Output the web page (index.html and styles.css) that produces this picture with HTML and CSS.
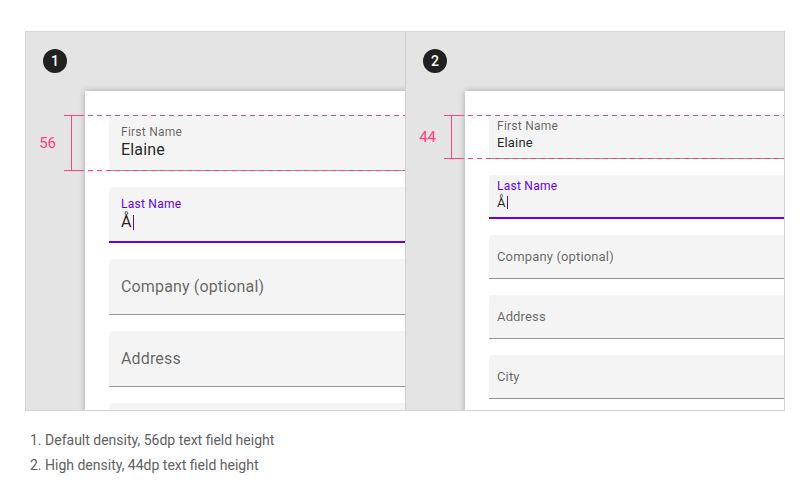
FILE: index.html
```html
<!DOCTYPE html>
<html lang="en">
<head>
<meta charset="utf-8">
<title>Text field density</title>
<link rel="stylesheet" href="styles.css">
</head>
<body>
<div class="demo">
  <section class="panel panel-default">
    <div class="badge">1</div>
    <div class="card">
      <div class="field filled"><span class="label">First Name</span><span class="value">Elaine</span></div>
      <div class="field filled focused"><span class="label">Last Name</span><span class="value">Å<span class="caret"></span></span></div>
      <div class="field empty"><span class="placeholder">Company (optional)</span></div>
      <div class="field empty"><span class="placeholder">Address</span></div>
      <div class="field empty"><span class="placeholder">City</span></div>
    </div>
    <div class="measure">
      <span class="num">56</span>
      <span class="bracket"></span>
      <span class="lines"></span>
    </div>
  </section>
  <section class="panel panel-dense">
    <div class="badge">2</div>
    <div class="card">
      <div class="field filled"><span class="label">First Name</span><span class="value">Elaine</span></div>
      <div class="field filled focused"><span class="label">Last Name</span><span class="value">Å<span class="caret"></span></span></div>
      <div class="field empty"><span class="placeholder">Company (optional)</span></div>
      <div class="field empty"><span class="placeholder">Address</span></div>
      <div class="field empty"><span class="placeholder">City</span></div>
      <div class="field empty"><span class="placeholder">State</span></div>
    </div>
    <div class="measure">
      <span class="num">44</span>
      <span class="bracket"></span>
      <span class="lines"></span>
    </div>
  </section>
</div>
<ol class="captions">
  <li><span class="cap-num">1.</span> Default density, 56dp text field height</li>
  <li><span class="cap-num">2.</span> High density, 44dp text field height</li>
</ol>
</body>
</html>
```

FILE: styles.css
```css
* { box-sizing: border-box; }

body {
  margin: 0;
  background: #ffffff;
  font-family: Roboto, "Liberation Sans", Arial, sans-serif;
}

.demo {
  display: flex;
  margin: 31px 0 0 25px;
  width: 760px;
  height: 380px;
  border: 1px solid #d4d4d4;
}

.panel {
  position: relative;
  overflow: hidden;
  background: #e4e4e4;
  padding: 17px 0 0 17px;
  display: flex;
  flex-direction: column;
  align-items: flex-start;
}

.panel-default {
  width: 380px;
  flex: none;
  border-right: 1px solid #cfcfcf;
}

.panel-dense {
  flex: 1;
}

.badge {
  width: 24px;
  height: 24px;
  border-radius: 50%;
  background: #212121;
  color: #ffffff;
  font-size: 14px;
  font-weight: 500;
  line-height: 24px;
  text-align: center;
}

.card {
  flex: none;
  width: 440px;
  height: 400px;
  margin: 18px 0 0 42px;
  background: #ffffff;
  box-shadow: 0 0 6px rgba(0, 0, 0, 0.28);
  padding: 24px;
  display: flex;
  flex-direction: column;
  gap: 16px;
}

.field {
  flex: none;
  height: 56px;
  background: #f4f4f4;
  border-radius: 4px 4px 0 0;
  border-bottom: 1px solid #949494;
  padding: 9px 12px 0;
  display: flex;
  flex-direction: column;
}

.field.empty {
  padding: 0 12px;
  justify-content: center;
}

.field.focused {
  border-bottom: 2px solid #6200ee;
}

.label {
  font-size: 12px;
  line-height: 16px;
  letter-spacing: 0.25px;
  color: rgba(0, 0, 0, 0.6);
}

.focused .label {
  color: #6200ee;
}

.value {
  font-size: 16px;
  line-height: 20px;
  letter-spacing: 0.15px;
  color: rgba(0, 0, 0, 0.87);
  display: flex;
  align-items: center;
}

.placeholder {
  font-size: 16px;
  line-height: 20px;
  letter-spacing: 0.15px;
  color: rgba(0, 0, 0, 0.6);
}

.caret {
  display: inline-block;
  width: 1px;
  height: 15px;
  margin-left: 1px;
  background: #6200ee;
}

/* dense variant */
.panel-dense .field {
  height: 44px;
  padding: 3px 8px 0;
}

.panel-dense .field.empty {
  padding: 0 8px;
}

.panel-dense .value,
.panel-dense .placeholder {
  font-size: 13px;
  line-height: 17px;
}

.panel-dense .caret {
  height: 13px;
}

/* measurement overlay */
.measure {
  position: absolute;
  left: 0;
  right: 0;
  top: 83px;
  height: 56px;
  display: flex;
  align-items: stretch;
}

.panel-dense .measure {
  height: 44px;
}

.num {
  width: 30px;
  text-align: right;
  align-self: center;
  font-size: 15px;
  line-height: 16px;
  color: #ff4081;
}

.bracket {
  flex: none;
  width: 15px;
  margin-left: 8px;
  border-top: 1px solid #ff4081;
  border-bottom: 1px solid #ff4081;
  background: linear-gradient(#ff4081, #ff4081) 7px 0 / 1px 100% no-repeat;
}

.lines {
  flex: 1;
  background:
    repeating-linear-gradient(90deg, #ff4081 0 5px, transparent 5px 9px) top / 100% 1px no-repeat,
    repeating-linear-gradient(90deg, #ff4081 0 5px, transparent 5px 9px) bottom / 100% 1px no-repeat;
}

.captions {
  margin: 17px 0 0 30px;
  padding: 0;
  list-style: none;
  font-size: 14px;
  line-height: 25px;
  color: #616161;
}
```
